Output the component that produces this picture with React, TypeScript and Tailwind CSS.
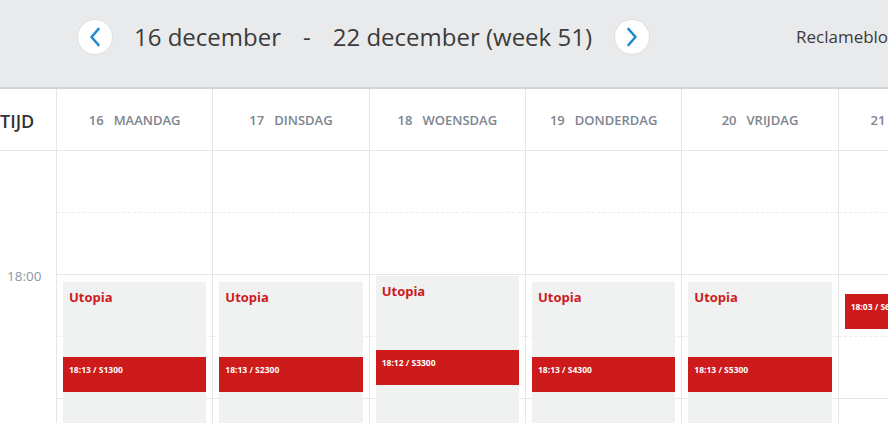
import React from "react";

type Ev = { top: number; title?: string; barTop: number; code: string; next?: number };

const days: { n: string; name: string; ev?: Ev }[] = [
  { n: "16", name: "MAANDAG", ev: { top: 131, title: "Utopia", barTop: 206, code: "18:13 / S1300", next: 243 } },
  { n: "17", name: "DINSDAG", ev: { top: 131, title: "Utopia", barTop: 206, code: "18:13 / S2300", next: 243 } },
  { n: "18", name: "WOENSDAG", ev: { top: 125, title: "Utopia", barTop: 199, code: "18:12 / S3300", next: 236 } },
  { n: "19", name: "DONDERDAG", ev: { top: 131, title: "Utopia", barTop: 206, code: "18:13 / S4300", next: 243 } },
  { n: "20", name: "VRIJDAG", ev: { top: 131, title: "Utopia", barTop: 206, code: "18:13 / S5300", next: 243 } },
  { n: "21", name: "ZATERDAG", ev: { top: 143, barTop: 143, code: "18:03 / S6300" } },
];

const Chevron = ({ dir }: { dir: "l" | "r" }) => (
  <svg width="12" height="20" viewBox="0 0 12 20" fill="none">
    <polyline
      points={dir === "l" ? "9.5,2 2.5,10 9.5,18" : "2.5,2 9.5,10 2.5,18"}
      stroke="#1d8ad0"
      strokeWidth="2.6"
      strokeLinecap="round"
      strokeLinejoin="round"
    />
  </svg>
);

const NavButton = ({ dir }: { dir: "l" | "r" }) => (
  <button className="flex h-9 w-9 shrink-0 items-center justify-center rounded-full border border-[#dcdfe3] bg-white">
    <Chevron dir={dir} />
  </button>
);

const BodyLines = () => (
  <div className="flex flex-col">
    {[0, 1, 2, 3].map((i) => (
      <div
        key={i}
        className={`h-[62px] border-b ${i % 2 === 0 ? "border-dashed border-[#ececec]" : "border-solid border-[#e6e6e6]"}`}
      />
    ))}
  </div>
);

export default function App() {
  return (
    <div className="h-[423px] w-[888px] overflow-hidden bg-white font-['Open_Sans',sans-serif]">
      <header className="flex h-[89px] items-center overflow-hidden border-b-2 border-[#d2d3d5] bg-[#e9eaec] pb-[14px] pl-[77px]">
        <NavButton dir="l" />
        <div className="ml-[21px] flex shrink-0 items-center whitespace-nowrap text-[24px] text-[#3b3b3b]">
          <span>16 december</span>
          <span className="mx-[22px]">-</span>
          <span>22 december (week 51)</span>
        </div>
        <div className="ml-[22px] shrink-0">
          <NavButton dir="r" />
        </div>
        <span className="ml-[146px] shrink-0 whitespace-nowrap text-[17px] text-[#3b3b3b]">Reclameblokken</span>
      </header>

      <div className="grid grid-cols-[56px_repeat(6,156.33px)]">
        <div className="flex h-[62px] items-center border-b border-[#e6e6e6] pt-[3px] text-[18px] font-semibold text-[#333]">
          TIJD
        </div>
        {days.map((d) => (
          <div
            key={d.n}
            className="flex h-[62px] items-center justify-center gap-[10px] border-b border-l border-[#e6e6e6] pt-[2px] text-[13px] font-semibold text-[#7d8590]"
          >
            <span>{d.n}</span>
            <span className="whitespace-nowrap">{d.name}</span>
          </div>
        ))}

        <div className="relative h-[272px]">
          <span className="absolute left-[7px] top-[115px] text-[13.5px] text-[#8c98a4]">18:00</span>
        </div>
        {days.map((d) => (
          <div key={d.n} className="relative h-[272px] border-l border-[#e6e6e6]">
            <BodyLines />
            {d.ev && d.ev.title && (
              <div
                className="absolute left-[6px] right-[6px] bottom-0 bg-[#f0f1f1]"
                style={{ top: d.ev.top }}
              >
                <div className="px-[6px] pt-[6px] text-[13px] font-bold text-[#cc1b1e]">{d.ev.title}</div>
              </div>
            )}
            {d.ev && (
              <div
                className="absolute left-[6px] right-[6px] h-[35px] bg-[#cd1a1a] px-[6px] pt-[7px] text-[8.5px] font-bold whitespace-nowrap text-white"
                style={{ top: d.ev.barTop }}
              >
                {d.ev.code}
              </div>
            )}
            {d.ev && d.ev.next && (
              <div
                className="absolute left-[6px] right-[6px] bottom-0 bg-[#f0f1f1]"
                style={{ top: d.ev.next }}
              />
            )}
          </div>
        ))}
      </div>
    </div>
  );
}
